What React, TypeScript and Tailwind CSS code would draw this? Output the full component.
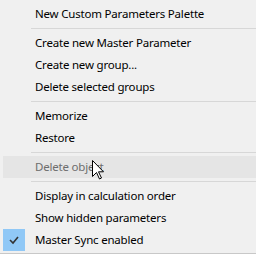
import React from "react";

const font = { fontFamily: '"Segoe UI", "Noto Sans", "Open Sans", sans-serif' };

function Item({ label, disabled, hover, checked }: { label: string; disabled?: boolean; hover?: boolean; checked?: boolean }) {
  return (
    <div className={`flex h-[22px] items-center ml-[3px] ${hover ? "bg-[#e5e5e5]" : ""}`}>
      <div className="w-[22px] h-[22px] flex items-center justify-center">
        {checked && (
          <div className="w-[22px] h-[22px] bg-[#90c8f6] flex items-center justify-center">
            <svg width="12" height="10" viewBox="0 0 12 10">
              <path d="M2 5 L5 8 L10 2" fill="none" stroke="#333" strokeWidth="1.6" />
            </svg>
          </div>
        )}
      </div>
      <span className={`ml-[10px] text-[11.5px] tracking-[-0.2px] leading-none ${disabled ? "text-[#6d6d6d]" : "text-black"}`}>{label}</span>
    </div>
  );
}

function Sep() {
  return <div className="h-[7px] flex items-center pl-[31px]"><div className="h-px w-full bg-[#d7d7d7]" /></div>;
}

export default function App() {
  return (
    <div className="relative w-[256px] h-[254px] bg-[#f0f0f0] border-b border-[#c8c8c8] pt-[3px] overflow-hidden" style={font}>
      <Item label="New Custom Parameters Palette" />
      <Sep />
      <Item label="Create new Master Parameter" />
      <Item label="Create new group..." />
      <Item label="Delete selected groups" />
      <Sep />
      <Item label="Memorize" />
      <Item label="Restore" />
      <Sep />
      <Item label="Delete object" disabled hover />
      <Sep />
      <Item label="Display in calculation order" />
      <Item label="Show hidden parameters" />
      <Item label="Master Sync enabled" checked />
      <svg className="absolute left-[92px] top-[160px]" width="13" height="20" viewBox="0 0 13 20">
        <path d="M0.5 0.5 L0.5 16.5 L4.5 12.5 L7.5 19 L9.5 18 L6.5 11.8 L11.5 11.8 Z" fill="#fff" stroke="#000" strokeWidth="1" strokeLinejoin="miter" />
      </svg>
    </div>
  );
}
